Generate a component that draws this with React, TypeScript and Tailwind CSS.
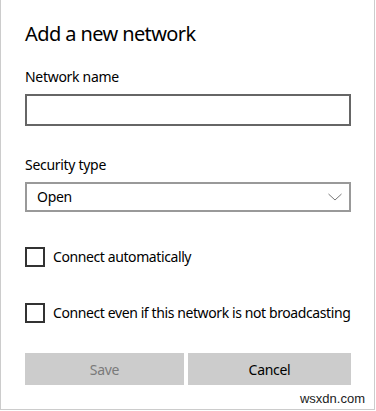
import React from "react";

export default function App() {
  return (
    <div className="w-[376px] h-[411px] bg-white font-['Noto_Sans',sans-serif] text-[#000]">
      <div className="relative w-[375px] h-[410px] border-l border-r border-b border-[#cccccc] pl-[24px] pr-[23px] pt-[20px]">
        <h1 className="text-[20px] leading-[28px] tracking-[-0.6px] text-[#000]">Add a new network</h1>

        <div className="mt-[19px] text-[14px] leading-[20px] tracking-[-0.3px] text-[#000]">Network name</div>
        <div className="mt-[7px] h-[32px] w-[326px] border-2 border-[#666666] bg-white" />

        <div className="mt-[29px] text-[14px] leading-[20px] tracking-[-0.3px] text-[#000]">Security type</div>
        <div className="mt-[7px] h-[30px] w-[326px] border-2 border-[#999999] bg-white flex items-center justify-between pl-[10px] pr-[7px]">
          <span className="text-[14px] leading-[20px] tracking-[-0.3px] text-[#000]">Open</span>
          <svg width="14" height="8" viewBox="0 0 14 8">
            <path d="M0.5 1 L7 7 L13.5 1" fill="none" stroke="#777" strokeWidth="1" />
          </svg>
        </div>

        <label className="mt-[35px] flex items-center gap-[8px] h-[20px]">
          <span className="w-[20px] h-[20px] border-2 border-[#333333] bg-white" />
          <span className="text-[14px] leading-[20px] tracking-[-0.4px] text-[#000]">Connect automatically</span>
        </label>

        <label className="mt-[36px] flex items-center gap-[8px] h-[20px]">
          <span className="w-[20px] h-[20px] border-2 border-[#333333] bg-white" />
          <span className="text-[14px] leading-[20px] tracking-[-0.4px] whitespace-nowrap text-[#000]">Connect even if this network is not broadcasting</span>
        </label>

        <div className="mt-[30px] flex w-[326px] gap-[4px]">
          <button className="w-[159px] h-[32px] bg-[#cccccc] text-[14px] tracking-[-0.3px] text-[#7a7a7a]">Save</button>
          <button className="flex-1 h-[32px] bg-[#cccccc] text-[14px] tracking-[-0.3px] text-[#000]">Cancel</button>
        </div>

        <div className="absolute right-[9px] bottom-[2px] text-[13px] leading-[16px] text-[#222] font-['Liberation_Sans',sans-serif]">wsxdn.com</div>
      </div>
    </div>
  );
}
